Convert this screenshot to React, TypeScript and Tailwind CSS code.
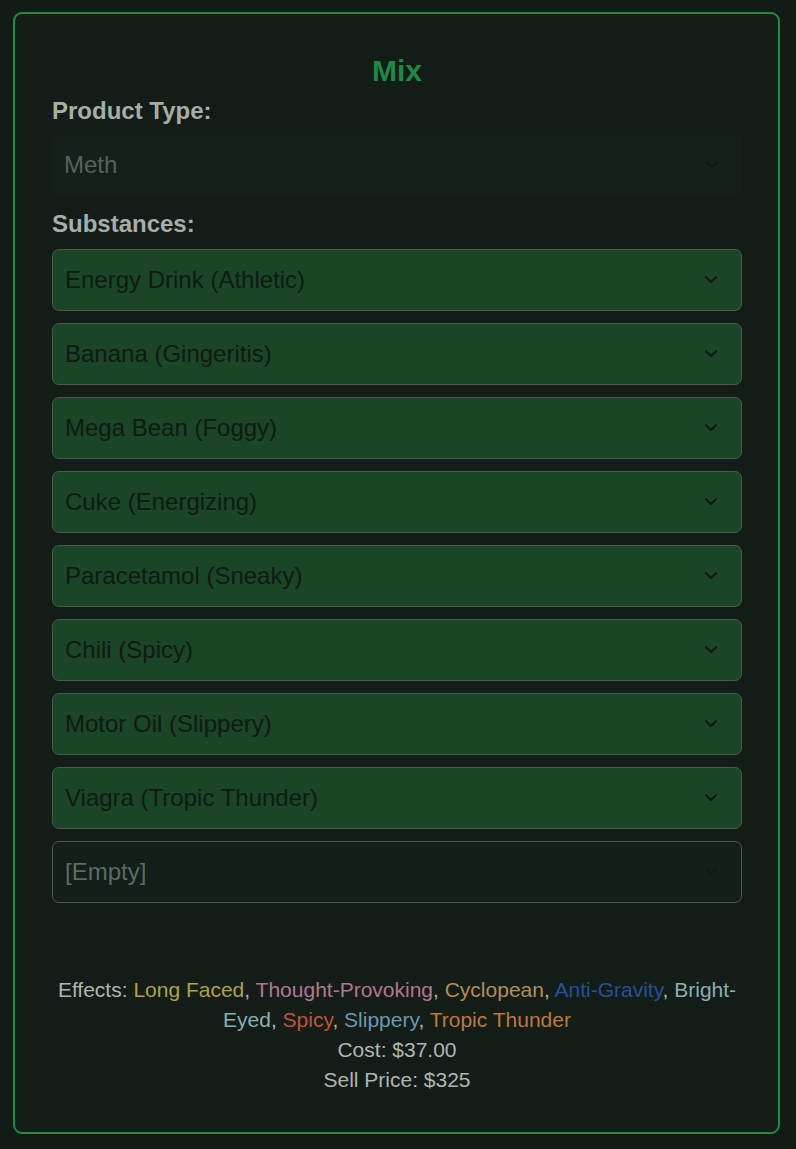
import React from 'react'

interface Effect {
    name: string
    color: string
}

const substances: string[] = [
    'Energy Drink (Athletic)',
    'Banana (Gingeritis)',
    'Mega Bean (Foggy)',
    'Cuke (Energizing)',
    'Paracetamol (Sneaky)',
    'Chili (Spicy)',
    'Motor Oil (Slippery)',
    'Viagra (Tropic Thunder)',
]

const effects: Effect[] = [
    { name: 'Long Faced', color: 'text-[#b0a04a]' },
    { name: 'Thought-Provoking', color: 'text-[#b27790]' },
    { name: 'Cyclopean', color: 'text-[#b68d56]' },
    { name: 'Anti-Gravity', color: 'text-[#26509a]' },
    { name: 'Bright-Eyed', color: 'text-[#8bafb0]' },
    { name: 'Spicy', color: 'text-[#bc573a]' },
    { name: 'Slippery', color: 'text-[#689ab2]' },
    { name: 'Tropic Thunder', color: 'text-[#bc793c]' },
]

const Chevron: React.FC<{ color: string }> = ({ color }) => (
    <svg width="12" height="8" viewBox="0 0 12 8" fill="none" className={color}>
        <polyline points="1,1.2 6,6 11,1.2" stroke="currentColor" strokeWidth="2.2" strokeLinecap="round" strokeLinejoin="round" />
    </svg>
)

const SelectBox: React.FC<{ label: string; empty?: boolean }> = ({ label, empty }) => (
    <div
        className={`flex items-center justify-between h-[62px] rounded-[7px] border border-[#4b5a4f] pl-[12px] pr-[24px] ${empty ? 'bg-[#111f18]' : 'bg-[#1a4526]'}`}
    >
        <span className={`text-[24px] leading-[28px] ${empty ? 'text-[#5d6a61]' : 'text-[#0f1a13]'}`}>{label}</span>
        <Chevron color={empty ? 'text-[#0f1a14]' : 'text-[#0e1a12]'} />
    </div>
)

export default function App() {
    return (
        <div className="min-h-[1149px] bg-[#121a15] pt-[12px] pl-[13px] pb-[15px] font-['Liberation_Sans',Arial,sans-serif]">
            <div className="w-[767px] rounded-[9px] border-2 border-[#1f8c45] bg-[#131c17] pt-[39px] pb-[37px] pl-[37px] pr-[36px]">
                {/* Title */}
                <h2 className="text-center text-[30px] leading-[36px] font-bold text-[#1f8a46]">Mix</h2>

                {/* Product type */}
                <div className="mt-[8px] text-[24px] leading-[28px] font-bold text-[#a7aea9]">Product Type:</div>
                <div className="mt-[10px] flex items-center justify-between h-[59px] bg-[#141f19] pl-[12px] pr-[24px]">
                    <span className="text-[24px] leading-[28px] text-[#57615b]">Meth</span>
                    <Chevron color="text-[#0e1811]" />
                </div>

                {/* Substances */}
                <div className="mt-[16px] text-[24px] leading-[28px] font-bold text-[#a7aea9]">Substances:</div>
                <div className="mt-[11px] flex flex-col gap-[12px]">
                    {substances.map((s) => (
                        <SelectBox key={s} label={s} />
                    ))}
                    <SelectBox label="[Empty]" empty />
                </div>

                {/* Summary */}
                <div className="mt-[72px] text-center text-[21px] leading-[30px] text-[#b0b6b2]">
                    <div>
                        Effects:{' '}
                        {effects.map((e, i) => (
                            <React.Fragment key={e.name}>
                                <span className={e.color}>{e.name}</span>
                                {i < effects.length - 1 ? ', ' : ''}
                            </React.Fragment>
                        ))}
                    </div>
                    <div>Cost: $37.00</div>
                    <div>Sell Price: $325</div>
                </div>
            </div>
        </div>
    )
}
